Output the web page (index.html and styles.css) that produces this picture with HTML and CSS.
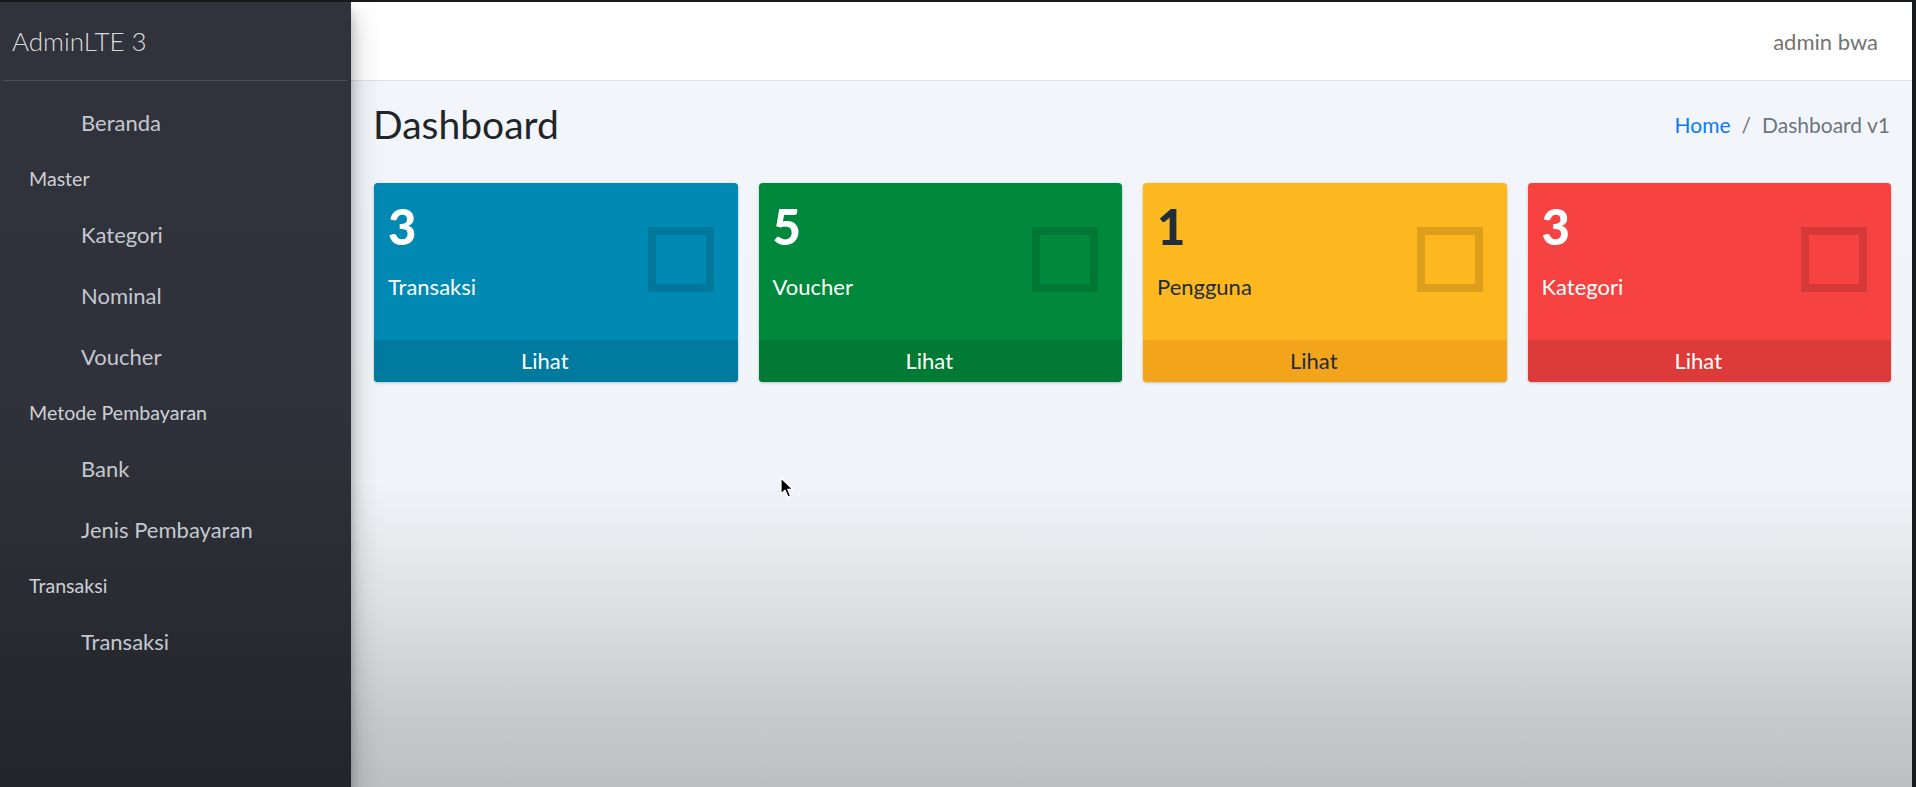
FILE: index.html
```html
<!DOCTYPE html>
<html lang="id">
<head>
<meta charset="utf-8">
<title>AdminLTE 3 | Dashboard</title>
<link rel="stylesheet" href="styles.css">
</head>
<body>
<div class="app">
  <aside class="sidebar">
    <div class="brand"><span class="brand-text">AdminLTE 3</span></div>
    <nav class="menu">
      <a class="item">Beranda</a>
      <div class="nav-head">Master</div>
      <a class="item">Kategori</a>
      <a class="item">Nominal</a>
      <a class="item">Voucher</a>
      <div class="nav-head">Metode Pembayaran</div>
      <a class="item">Bank</a>
      <a class="item">Jenis Pembayaran</a>
      <div class="nav-head">Transaksi</div>
      <a class="item">Transaksi</a>
    </nav>
  </aside>
  <div class="main">
    <header class="topbar"><span class="user">admin bwa</span></header>
    <section class="content">
      <div class="content-head">
        <h1>Dashboard</h1>
        <ol class="crumbs">
          <li class="crumb-link">Home</li>
          <li class="crumb-sep">/</li>
          <li class="crumb-active">Dashboard v1</li>
        </ol>
      </div>
      <div class="boxes">
        <div class="box box-info">
          <div class="inner"><h3>3</h3><p>Transaksi</p></div>
          <div class="icon"></div>
          <a class="box-foot">Lihat<span class="foot-icon"></span></a>
        </div>
        <div class="box box-success">
          <div class="inner"><h3>5</h3><p>Voucher</p></div>
          <div class="icon"></div>
          <a class="box-foot">Lihat<span class="foot-icon"></span></a>
        </div>
        <div class="box box-warning">
          <div class="inner"><h3>1</h3><p>Pengguna</p></div>
          <div class="icon"></div>
          <a class="box-foot">Lihat<span class="foot-icon"></span></a>
        </div>
        <div class="box box-danger">
          <div class="inner"><h3>3</h3><p>Kategori</p></div>
          <div class="icon"></div>
          <a class="box-foot">Lihat<span class="foot-icon"></span></a>
        </div>
      </div>
    </section>
  </div>
</div>
<svg class="cursor" width="14" height="22" viewBox="0 0 14 22">
  <path d="M1 1 L1 17 L5 13.2 L8 20 L10.6 18.9 L7.7 12.3 L12.8 12.3 Z" fill="#000" stroke="#fff" stroke-width="1.2" stroke-linejoin="round"/>
</svg>
</body>
</html>
```

FILE: styles.css
```css
html, body {
  margin: 0;
  padding: 0;
  height: 100%;
}
body {
  background: #17191c;
  font-family: Lato, "Source Sans Pro", "Noto Sans", sans-serif;
  overflow: hidden;
  position: relative;
}
.app {
  display: flex;
  margin-top: 2px;
  width: 1912px;
  height: 785px;
}
.sidebar {
  width: 351px;
  flex: none;
  display: flex;
  flex-direction: column;
  background: linear-gradient(to bottom, #30333b 0, #2f323a 400px, #23252a 100%);
  box-shadow: 0 14px 28px rgba(0,0,0,.25), 0 10px 10px rgba(0,0,0,.22);
  position: relative;
  z-index: 2;
}
.brand {
  height: 78px;
  margin: 0 3px;
  padding-left: 9px;
  border-bottom: 1px solid #4a4f57;
  display: flex;
  align-items: center;
}
.brand-text {
  font-size: 26px;
  font-weight: 300;
  color: rgba(255,255,255,.84);
}
.menu {
  display: flex;
  flex-direction: column;
  padding-top: 11px;
}
.item {
  height: 61px;
  display: flex;
  align-items: center;
  padding-left: 81px;
  font-size: 22px;
  color: #c4c8d0;
}
.nav-head {
  height: 51px;
  display: flex;
  align-items: center;
  padding-left: 29px;
  font-size: 19.6px;
  color: #cdd0d6;
}
.main {
  flex: 1;
  display: flex;
  flex-direction: column;
  min-width: 0;
}
.topbar {
  height: 78px;
  flex: none;
  background: #fff;
  border-bottom: 1px solid #dee2e6;
  display: flex;
  align-items: center;
  justify-content: flex-end;
  padding-right: 34px;
}
.user {
  font-size: 22px;
  color: #737373;
}
.content {
  flex: 1;
  background: linear-gradient(to bottom, #f2f5f9 0, #f1f4f8 400px, #dcdee2 532px, #c8c9cd 632px, #bebfc3 100%);
}
.content-head {
  display: flex;
  justify-content: space-between;
  align-items: center;
  padding: 19px 22px 0 22px;
}
.content-head h1 {
  margin: 0;
  font-size: 39px;
  font-weight: 400;
  line-height: 48px;
  color: #212529;
}
.crumbs {
  list-style: none;
  margin: 0;
  padding: 0;
  display: flex;
  gap: 11px;
  font-size: 21px;
  color: #6c757d;
}
.crumb-link {
  color: #0a7bf0;
}
.boxes {
  display: grid;
  grid-template-columns: repeat(4, 1fr);
  gap: 21px;
  padding: 0 21px 0 23px;
  margin-top: 35px;
}
.box {
  position: relative;
  border-radius: 4px;
  overflow: hidden;
  color: #fff;
  box-shadow: 0 0 1px rgba(0,0,0,.125), 0 1px 3px rgba(0,0,0,.2);
}
.inner {
  padding: 14px;
}
.inner h3 {
  margin: 0 0 14px;
  font-size: 49px;
  font-weight: 900;
  line-height: 59px;
}
.inner p {
  margin: 0 0 22.4px;
  font-size: 22px;
  line-height: 33.6px;
}
.icon {
  position: absolute;
  top: 44px;
  right: 24px;
  width: 66px;
  height: 65px;
  box-sizing: border-box;
  border: 8px solid rgba(0,0,0,.13);
}
.box-foot {
  display: block;
  text-align: center;
  padding: 4px 0;
  line-height: 34px;
  font-size: 22px;
  color: #fff;
}
.foot-icon {
  display: inline-block;
  width: 22px;
}
.box-info { background: #0089b3; }
.box-info .box-foot { background: #007a9f; }
.box-success { background: #00893c; }
.box-success .box-foot { background: #007a35; }
.box-warning { background: #fdb71f; color: #1f2d3d; }
.box-warning .box-foot { background: #f2a41a; color: #1f2d3d; }
.box-danger { background: #f64341; }
.box-danger .box-foot { background: #dc3b39; }
.cursor {
  position: absolute;
  left: 780px;
  top: 477px;
}
```
